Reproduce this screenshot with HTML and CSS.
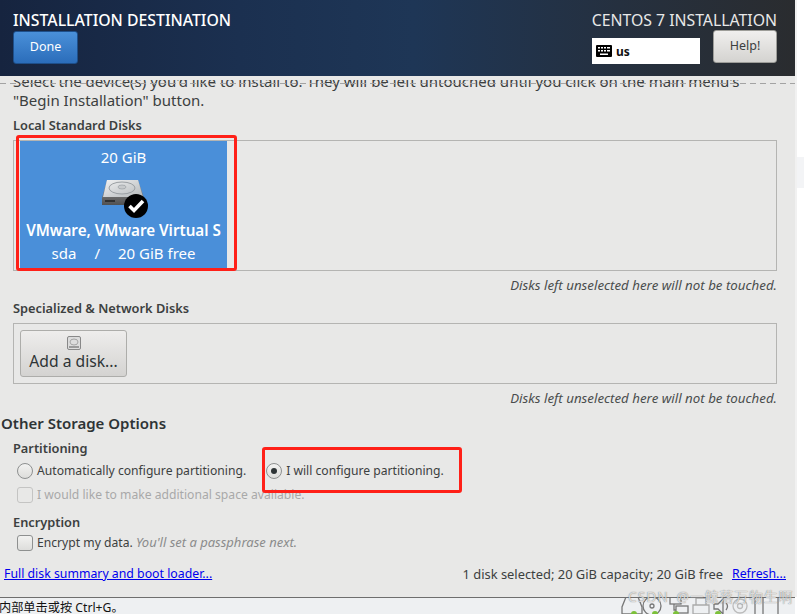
FILE: index.html
```html
<!DOCTYPE html>
<html lang="en">
<head>
<meta charset="utf-8">
<title>Installation Destination</title>
<link rel="stylesheet" href="styles.css">
</head>
<body>
<div class="window">
  <header class="topbar">
    <div class="top-left">
      <h1 class="title">INSTALLATION DESTINATION</h1>
      <button class="done">Done</button>
    </div>
    <div class="top-right">
      <div class="product">CENTOS 7 INSTALLATION</div>
      <div class="top-controls">
        <div class="layout">
          <svg class="kbd" viewBox="0 0 16 12" width="16" height="12"><rect width="16" height="12" rx="1" fill="#000"/><g fill="#fff"><rect x="2" y="2" width="2" height="1.5"/><rect x="5" y="2" width="2" height="1.5"/><rect x="8" y="2" width="2" height="1.5"/><rect x="11" y="2" width="3" height="1.5"/><rect x="2" y="5" width="2" height="1.5"/><rect x="5" y="5" width="2" height="1.5"/><rect x="8" y="5" width="2" height="1.5"/><rect x="11" y="5" width="3" height="1.5"/><rect x="4" y="8.5" width="8" height="1.5"/></g></svg>
          <span>us</span>
        </div>
        <button class="help">Help!</button>
      </div>
    </div>
  </header>

  <div class="clip">
    <p class="intro">Select the device(s) you'd like to install to.  They will be left untouched until you click on the main menu's<br>"Begin Installation" button.</p>
    <div class="dash"></div>
  </div>

  <main class="main">
    <h2 class="label">Local Standard Disks</h2>
    <div class="disk-box">
      <div class="tile">
        <div class="tile-size">20 GiB</div>
        <div class="tile-icon">
          <svg viewBox="0 0 48 38" width="48" height="38">
            <defs>
              <linearGradient id="top" x1="0" y1="0" x2="1" y2="1"><stop offset="0" stop-color="#f0f1f2"/><stop offset="1" stop-color="#b4b8ba"/></linearGradient>
              <linearGradient id="front" x1="0" y1="0" x2="0" y2="1"><stop offset="0" stop-color="#a0a0a0"/><stop offset="1" stop-color="#505050"/></linearGradient>
            </defs>
            <path d="M7 0H38L44 18V25H2V18Z" fill="url(#front)"/>
            <path d="M7 0H38L43 17H3Z" fill="url(#top)"/>
            <ellipse cx="22" cy="8" rx="13" ry="6" fill="none" stroke="#9a9fa3" stroke-width="1"/>
            <ellipse cx="22" cy="7" rx="4" ry="2" fill="#c7cacc" stroke="#9a9fa3" stroke-width=".7"/>
            <rect x="5" y="20" width="10" height="2" fill="#2f2f2f"/>
            <circle cx="36" cy="26" r="12" fill="#000"/>
            <path d="M29.5 26l4.500 4.500 9-9.500" fill="none" stroke="#fff" stroke-width="3.600"/>
          </svg>
        </div>
        <div class="tile-name">VMware, VMware Virtual S</div>
        <div class="tile-meta"><span>sda</span><span>/</span><span>20 GiB free</span></div>
      </div>
    </div>
    <p class="hint">Disks left unselected here will not be touched.</p>

    <h2 class="label label-special">Specialized &amp; Network Disks</h2>
    <div class="add-box">
      <button class="add">
        <svg viewBox="0 0 14 14" width="14" height="14"><rect x=".5" y=".5" width="13" height="13" rx="1.500" fill="#dcdcdc" stroke="#888"/><ellipse cx="7" cy="6" rx="4" ry="3" fill="none" stroke="#a5a5a5"/><rect x="2" y="10" width="10" height="2" fill="#9a9a9a"/></svg>
        <span class="add-text">Add a disk...</span>
      </button>
    </div>
    <p class="hint">Disks left unselected here will not be touched.</p>
  </main>

  <section class="options">
    <h2 class="options-title">Other Storage Options</h2>
    <h3 class="label label-part">Partitioning</h3>
    <div class="radios">
      <div class="choice"><span class="radio"></span><span>Automatically configure partitioning.</span></div>
      <div class="choice"><span class="radio radio-on"></span><span>I will configure partitioning.</span></div>
    </div>
    <div class="choice choice-off"><span class="check"></span><span>I would like to make additional space available.</span></div>
    <h3 class="label label-enc">Encryption</h3>
    <div class="choice"><span class="check check-on"></span><span>Encrypt my data. <em>You'll set a passphrase next.</em></span></div>
  </section>

  <footer class="foot">
    <a class="link" href="#">Full disk summary and boot loader...</a>
    <div class="foot-right"><span class="summary">1 disk selected; 20 GiB capacity; 20 GiB free</span><a class="link" href="#">Refresh...</a></div>
  </footer>
</div>

<div class="status">
  <span class="status-text">内部单击或按 Ctrl+G。</span>
  <div class="tray">
    <svg viewBox="0 0 174 20" width="174" height="20" fill="none" stroke="#777" stroke-width="1.300">
      <path d="M1 18V11L5 1H17L21 11V18Z"/>
      <circle cx="31" cy="10" r="9"/><circle cx="31" cy="10" r="2"/>
      <rect x="49" y="1" width="11" height="7"/><rect x="55" y="10" width="12" height="7"/><path d="M53 8V14H55"/>
      <path d="M72 9H88V18H72ZM75 9V2H85V9" stroke="#aaa"/>
      <path d="M93 8H97L102 3V18L97 13H93Z"/><path d="M105 7Q108 10 105 14"/>
      <circle cx="119" cy="10" r="7" stroke="#bbb"/><circle cx="119" cy="10" r="2.500" stroke="#bbb"/>
      <path d="M134 1V19"/>
      <path d="M142 1H157V19H142Z"/>
    </svg>
    <i class="dot dot1"></i><i class="dot dot2"></i><i class="dot dot3"></i><i class="dot dot4"></i>
  </div>
</div>

<div class="side-band"></div>
<div class="mark mark-disk"></div>
<div class="mark mark-radio"></div>
<div class="watermark">CSDN @一鲸落万物生啊</div>
</body>
</html>
```

FILE: styles.css
```css
* { box-sizing: border-box; }
html, body { margin: 0; padding: 0; }
body {
  width: 804px;
  height: 614px;
  overflow: hidden;
  position: relative;
  background: #fff;
  font-family: "Noto Sans", "Noto Sans CJK SC", sans-serif;
  font-size: 13px;
  color: #3c4040;
}
h1, h2, h3, p { margin: 0; font-weight: normal; }
button { font-family: inherit; }

.window {
  width: 797px;
  height: 597px;
  background: #e8e8e7;
  border-right: 2px solid #f1f1f1;
  display: flex;
  flex-direction: column;
}

.topbar {
  height: 76px;
  flex: none;
  display: flex;
  justify-content: space-between;
  padding: 11px 18px 0 13px;
  background: linear-gradient(90deg, #16243f 0%, #1b3050 30%, #1e3656 52%, #25303f 78%, #2a2c2f 100%);
}
.title { color: #fff; font-size: 15.800px; font-weight: 500; line-height: 18px; }
.done {
  display: block;
  margin-top: 2px;
  width: 65px;
  height: 33px;
  padding: 0 0 2px;
  border: 1px solid #1e4f8a;
  border-radius: 3px;
  background: linear-gradient(#4a90d9, #2b6dba);
  color: #fff;
  font-size: 12.500px;
}
.top-right { display: flex; flex-direction: column; align-items: flex-end; width: 190px; }
.product { color: #e8e8e8; font-size: 15.800px; line-height: 18px; white-space: nowrap; }
.top-controls { display: flex; align-items: flex-start; margin-top: 1px; width: 185px; justify-content: space-between; }
.layout {
  margin-top: 8px;
  width: 108px;
  height: 26px;
  background: #fff;
  display: flex;
  align-items: center;
  gap: 4px;
  padding-left: 4px;
  color: #111;
  font-size: 12px;
  font-weight: 700;
}
.help {
  width: 64px;
  height: 33px;
  padding: 0 0 2px;
  border: 1px solid #9d9d99;
  border-radius: 3px;
  background: linear-gradient(#f0efee, #d4d3d0);
  color: #3c4040;
  font-size: 12.500px;
}

.clip { height: 34px; flex: none; overflow: hidden; position: relative; }
.clip::before {
  content: "";
  position: absolute;
  left: 0; right: 0; top: 0;
  height: 4px;
  background: #e8e8e7;
}
.intro {
  margin-top: -4px;
  padding-left: 13px;
  font-size: 15px;
  line-height: 19px;
  white-space: nowrap;
}
.dash {
  position: absolute;
  left: 0; right: 0; top: 7px;
  height: 1px;
  background: repeating-linear-gradient(90deg, #a3a3a3 0 6px, transparent 6px 10px);
}

.main { padding: 0 18px 0 13px; }
.label { font-size: 12.800px; font-weight: 600; line-height: 16px; color: #3c4040; }
.main > .label:first-child { margin-top: 7px; }
.disk-box {
  margin-top: 7px;
  height: 131px;
  border: 1px solid #b4b4b2;
  padding: 0 0 0 6px;
}
.tile {
  width: 207px;
  height: 128px;
  background: #4a8fd9;
  color: #fff;
  text-align: center;
  padding-top: 7px;
}
.tile-size { font-size: 15px; line-height: 19px; }
.tile-icon { height: 38px; margin-top: 13px; display: flex; justify-content: center; }
.tile-name { font-size: 15.200px; font-weight: 600; line-height: 20px; white-space: nowrap; margin-top: 2px; }
.tile-meta { display: flex; justify-content: center; gap: 18px; font-size: 15px; line-height: 20px; margin-top: 3px; }
.hint { text-align: right; font-style: italic; font-size: 13.300px; line-height: 16px; margin-top: 6px; color: #4a4d4d; }
.label-special { margin-top: 7px; }
.add-box {
  margin-top: 7px;
  height: 61px;
  border: 1px solid #b4b4b2;
  padding: 6px;
}
.add {
  width: 107px;
  height: 47px;
  padding: 5px 0 0;
  border: 1px solid #adadaa;
  border-radius: 3px;
  background: linear-gradient(#eeedec, #d4d3d1);
  color: #2e3436;
  font-size: 15.700px;
  display: flex;
  flex-direction: column;
  align-items: center;
  line-height: 20px;
}
.add-text { margin-top: 1px; }

.options { padding: 0 18px 0 13px; margin-top: 7px; }
.options-title { font-size: 15px; font-weight: 600; line-height: 20px; margin-left: -12px; color: #2e3436; }
.label-part { margin-top: 7px; }
.radios { display: flex; gap: 20px; margin-top: 6px; padding-left: 4px; height: 18px; }
.choice { display: flex; align-items: center; gap: 4px; font-size: 12.150px; line-height: 18px; padding-left: 4px; }
.radios .choice { padding-left: 0; }
.choice-off { color: #a8a9a9; margin-top: 6px; }
.radio, .check {
  flex: none;
  width: 16px;
  height: 16px;
  border: 1px solid #8e9090;
  background: linear-gradient(#f2f2f1, #dddddb);
}
.radio { border-radius: 50%; position: relative; }
.radio-on::after {
  content: "";
  position: absolute;
  left: 4px; top: 4px;
  width: 6px; height: 6px;
  border-radius: 50%;
  background: #2e3436;
}
.check { border-radius: 3px; }
.choice-off .check { border-color: #c4c4c3; background: #e8e8e7; }
.label-enc { margin-top: 10px; }
.choice em { color: #8b8c8c; font-size: 13px; }
.label-enc + .choice { margin-top: 3px; }

.foot {
  margin-top: 13px;
  padding: 0 9px 0 4px;
  display: flex;
  justify-content: space-between;
  font-size: 12.300px;
  line-height: 18px;
}
.foot-right { display: flex; gap: 9px; }
.summary { font-size: 12.900px; }
.link { color: #0000ee; text-decoration: underline; }

.status {
  height: 17px;
  width: 795px;
  border-top: 1px solid #6e6e6e;
  background: #eef0f2;
  color: #111;
  font-size: 12.200px;
  line-height: 19px;
  position: relative;
  overflow: hidden;
  white-space: nowrap;
}
.status-text { margin-left: -1px; }
.tray { position: absolute; left: 621px; top: -2px; width: 174px; height: 20px; }
.dot { position: absolute; top: 15px; width: 6px; height: 6px; border-radius: 50%; background: #7cc13a; }
.dot1 { left: 10px; }
.dot2 { left: 31px; }
.dot3 { left: 52px; }
.dot4 { left: 94px; }

.side-band { position: absolute; left: 797px; top: 157px; width: 7px; height: 31px; background: #f3f4f6; }
.mark { position: absolute; border: 3px solid #ff2018; border-radius: 3px; }
.mark-disk { left: 16px; top: 135px; width: 221px; height: 136px; }
.mark-radio { left: 262px; top: 447px; width: 200px; height: 46px; }
.watermark {
  position: absolute;
  left: 628px;
  top: 587px;
  font-size: 13.800px;
  line-height: 20px;
  word-spacing: 3px;
  letter-spacing: 1px;
  color: rgba(255, 255, 255, .75);
  text-shadow: 0 0 1px rgba(60, 60, 60, .8);
  white-space: nowrap;
}
```
